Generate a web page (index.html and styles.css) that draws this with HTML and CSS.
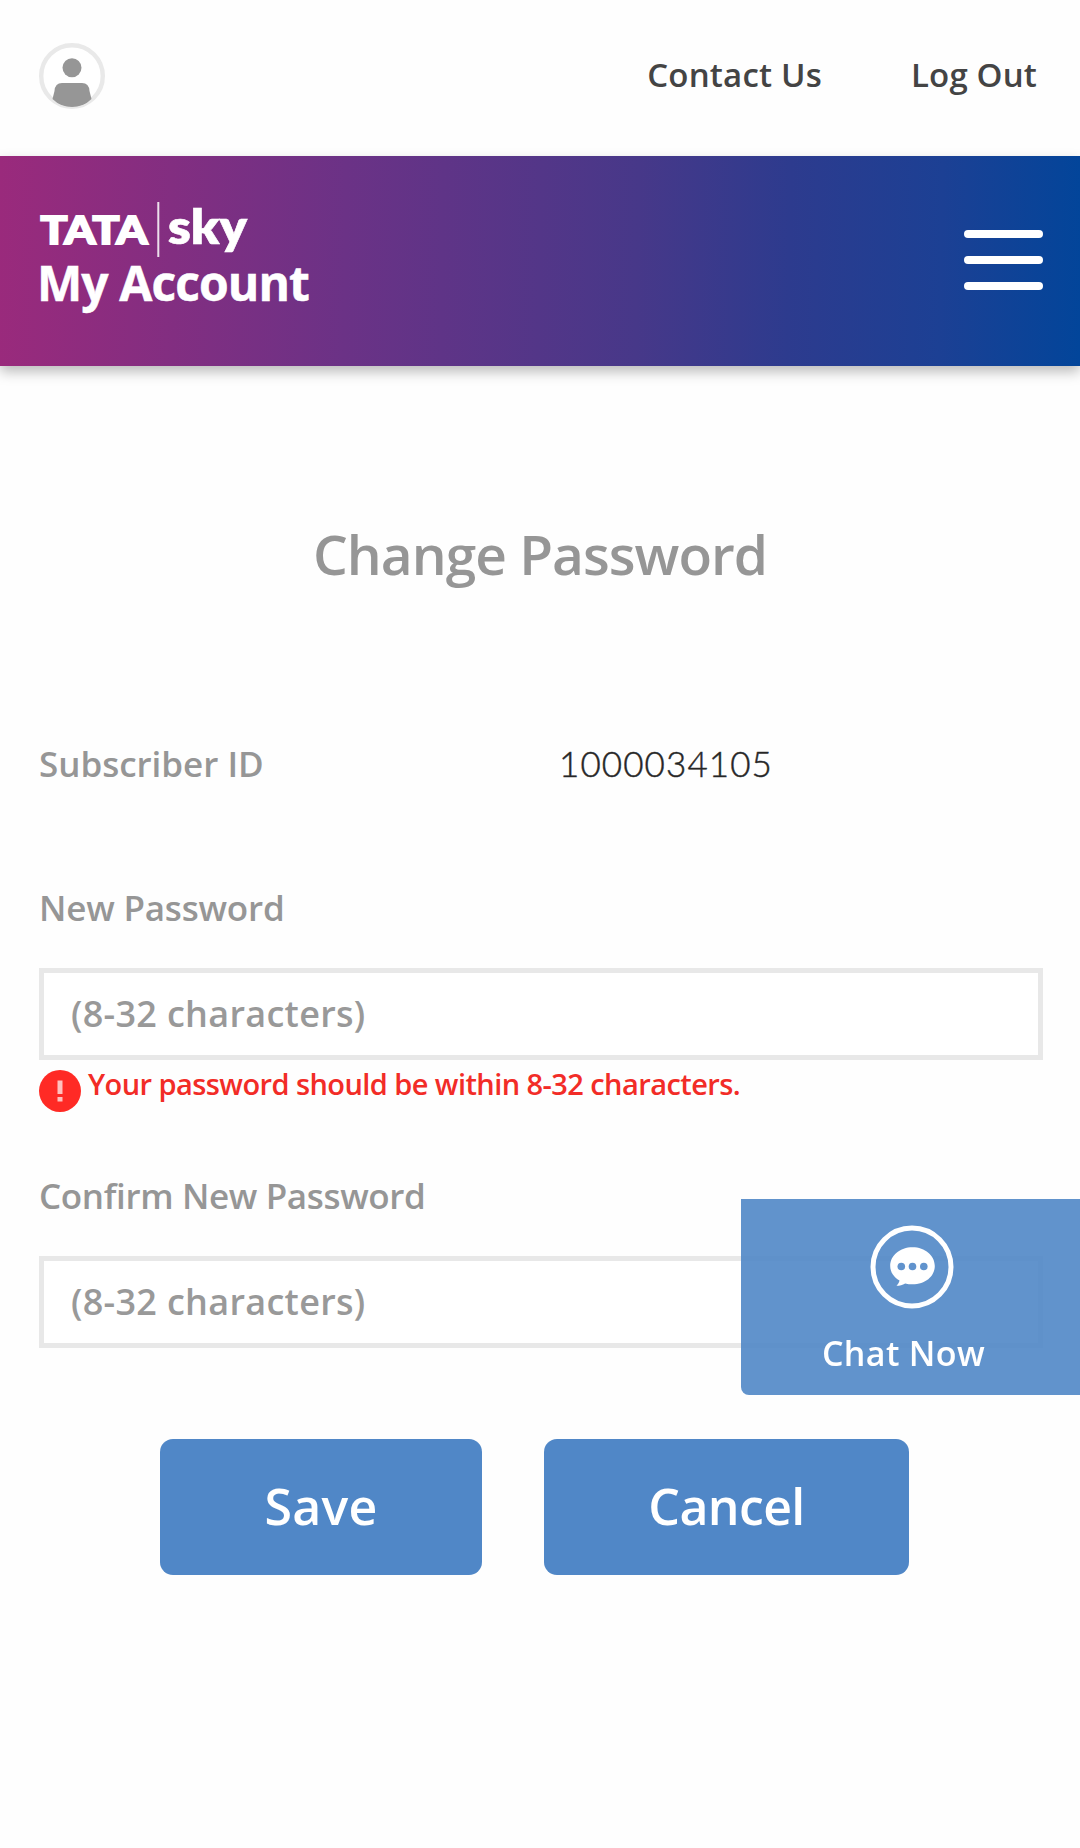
FILE: index.html
```html
<!DOCTYPE html>
<html lang="en">
<head>
<meta charset="utf-8">
<title>Change Password</title>
<link rel="stylesheet" href="styles.css">
</head>
<body>
<header class="topbar">
  <svg class="avatar" width="66" height="66" viewBox="0 0 66 66" aria-hidden="true">
    <defs><clipPath id="disc"><circle cx="33" cy="33" r="31.5"/></clipPath></defs>
    <circle cx="33" cy="33" r="30.8" fill="#fff" stroke="#e9e9e9" stroke-width="4.4"/>
    <circle cx="33" cy="24.7" r="9.5" fill="#969696"/>
    <path clip-path="url(#disc)" fill="#969696" d="M23 40h20q7 0 7.500 8l2 8q-8 8-19.500 8t-19.500-8l2-8q.5-8 7.500-8z"/>
  </svg>
  <nav class="links">
    <a class="link link-contact">Contact Us</a>
    <a class="link link-logout">Log Out</a>
  </nav>
</header>

<div class="banner">
  <div class="brand">
    <svg class="logo" width="220" height="65" viewBox="0 -10 220 65" aria-label="TATA sky">
      <text class="logo-tata" x="1.500" y="41.500" textLength="107" lengthAdjust="spacingAndGlyphs">TATA</text>
      <rect x="118.300" y="0" width="2" height="55" fill="#fff" opacity=".85"/>
      <text class="logo-sky" x="129" y="41.500" textLength="79" lengthAdjust="spacingAndGlyphs">sky</text>
    </svg>
    <div class="brand-name">My Account</div>
  </div>
  <div class="burger"><span class="bar"></span><span class="bar"></span><span class="bar"></span></div>
</div>

<main class="page">
  <h1 class="title">Change Password</h1>
  <div class="row">
    <div class="label label-id">Subscriber ID</div>
    <div class="subscriber">1000034105</div>
  </div>
  <label class="label label-new" for="new">New Password</label>
  <input class="field" id="new" type="text" placeholder="(8-32 characters)">
  <div class="error">
    <svg class="error-icon" width="42" height="42" viewBox="0 0 42 42" aria-hidden="true">
      <circle cx="21" cy="21" r="21" fill="#ff2a25"/>
      <rect x="18.500" y="10.500" width="5" height="13.500" fill="#ffc0be"/>
      <rect x="18.500" y="27" width="5" height="4.500" fill="#ffc0be"/>
    </svg>
    <span class="error-text">Your password should be within 8-32 characters.</span>
  </div>
  <label class="label label-confirm" for="confirm">Confirm New Password</label>
  <input class="field" id="confirm" type="text" placeholder="(8-32 characters)">
  <div class="actions">
    <button class="btn btn-save">Save</button>
    <button class="btn btn-cancel">Cancel</button>
  </div>
</main>

<a class="chat">
  <svg class="chat-icon" width="84" height="84" viewBox="0 0 84 84" aria-hidden="true">
    <circle cx="42" cy="42" r="39" fill="none" stroke="#fff" stroke-width="5"/>
    <path fill="#fff" d="M42.500 22.200c12.500 0 22.300 8.200 22.300 18.700S55 59.300 42.500 59.300c-2.600 0-5-.3-7.300-.9-2.700 1.500-5.400 2.300-8.700 2.300 1.600-1.500 2.600-3.200 3-5.200-5.700-3.300-9.300-8.600-9.300-14.600 0-10.500 9.800-18.700 22.300-18.700z"/>
    <g fill="#6193cd"><circle cx="31.300" cy="41.500" r="3.800"/><circle cx="42.500" cy="41.500" r="3.800"/><circle cx="53.800" cy="41.500" r="3.800"/></g>
  </svg>
  <span class="chat-text">Chat Now</span>
</a>
</body>
</html>
```
FILE: styles.css
```css
* { box-sizing: border-box; }

body {
  margin: 0;
  min-height: 1848px;
  background: #fefefe;
  font-family: "Open Sans", "Noto Sans", sans-serif;
  font-weight: 600;
  color: #969696;
}

.topbar {
  display: flex;
  justify-content: space-between;
  align-items: center;
  height: 156px;
  padding: 0 43px 4px 39px;
}
.avatar { display: block; }
.links { display: flex; gap: 89px; padding-bottom: 3px; }
.link { font-size: 33px; line-height: 44px; color: #444; }
.link-contact { letter-spacing: .2px; }
.link-logout { letter-spacing: .15px; }

.banner {
  display: flex;
  justify-content: space-between;
  height: 210px;
  padding: 36px 37px 0 39px;
  background: linear-gradient(91deg, #9a2a7c 0%, #6b3286 32%, #473889 59%, #2d3b8e 73%, #1c4094 87%, #02459a 100%);
  box-shadow: 0 6px 12px rgba(0, 0, 0, .26);
}
.logo { display: block; }
.logo text { fill: #fff; }
.logo-tata { font: 900 38px Lato, sans-serif; stroke: #fff; stroke-width: 1.8px; }
.logo-sky { font: 800 48px Lato, sans-serif; stroke: #fff; stroke-width: .6px; }
.brand-name {
  font-size: 48px;
  font-weight: 700;
  line-height: 51px;
  letter-spacing: -.92px;
  margin-left: -2px;
  color: #fff;
  -webkit-text-stroke: .5px #fff;
}
.burger { display: flex; flex-direction: column; gap: 18px; padding-top: 38px; }
.bar { width: 79px; height: 8px; border-radius: 4px; background: #fff; }

.page { padding: 153px 37px 0 39px; }
.title {
  margin: 0 0 151px;
  padding-right: 2px;
  text-align: center;
  font-size: 55px;
  font-weight: 600;
  line-height: 70px;
  letter-spacing: -.97px;
}
.row { display: flex; align-items: flex-start; margin-bottom: 96px; }
.label { display: block; font-size: 35px; line-height: 48px; }
.label-id { width: 520px; letter-spacing: -.03px; }
.label-new { letter-spacing: -.2px; }
.label-confirm { margin-top: 60px; letter-spacing: -.36px; }
.subscriber {
  font: 300 35px/48px Lato, sans-serif;
  letter-spacing: 1.1px;
  margin-top: -1px;
  color: #222;
  -webkit-text-stroke: .5px #333;
}
.field {
  display: block;
  width: 100%;
  height: 92px;
  margin: 36px 0 0;
  padding: 0 27px 2px;
  border: 5px solid #e8e8e8;
  border-radius: 0;
  background: #fff;
  font: 600 36px "Open Sans", sans-serif;
  letter-spacing: .3px;
}
.field::placeholder { color: #999; opacity: 1; }
.error { display: flex; align-items: flex-start; gap: 7px; margin-top: 10px; }
.error-icon { display: block; flex: none; }
.error-text { font-size: 29px; line-height: 28px; letter-spacing: -.57px; white-space: nowrap; color: #f22c27; }

.actions { display: flex; gap: 62px; margin: 91px 0 0 121px; }
.btn {
  height: 136px;
  padding: 0 0 3px;
  border: 0;
  border-radius: 13px;
  background: #5087c7;
  font: 600 50px "Open Sans", sans-serif;
  color: #fff;
}
.btn-save { width: 322px; letter-spacing: .27px; }
.btn-cancel { width: 365px; letter-spacing: -.62px; }

/* floating chat launcher, pinned to the right edge */
.chat {
  position: fixed;
  top: 1199px;
  right: 0;
  width: 339px;
  height: 196px;
  display: flex;
  flex-direction: column;
  align-items: center;
  padding-top: 26px;
  border-radius: 0 0 0 8px;
  background: rgba(80, 135, 199, .9);
  color: #fff;
}
.chat-icon { display: block; margin-left: 3px; }
.chat-text { margin: 20px 14px 0 0; font-size: 34px; line-height: 48px; letter-spacing: .35px; }
```
